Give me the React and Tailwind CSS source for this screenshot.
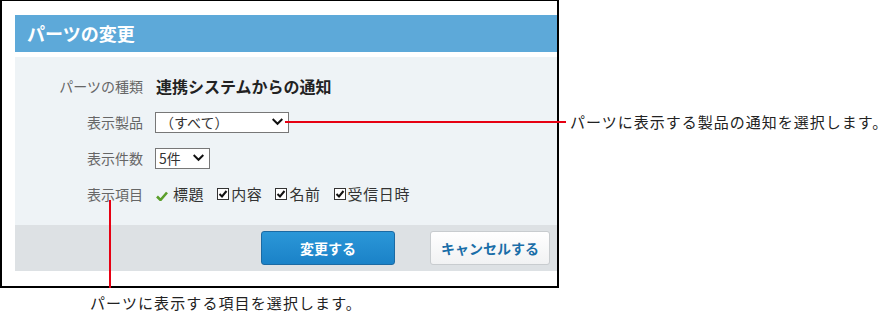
import React from "react";

const font = { fontFamily: '"Noto Sans CJK JP", "Noto Sans", sans-serif' };

function Chevron({ className }) {
  return (
    <svg viewBox="0 0 12 8" className={className} fill="none" stroke="#111" strokeWidth="2.2" strokeLinecap="square">
      <path d="M1.5 1.5 L6 6 L10.5 1.5" />
    </svg>
  );
}

function Check() {
  return (
    <svg viewBox="0 0 12 12" className="w-[12px] h-[12px]">
      <rect x="0.5" y="0.5" width="11" height="11" fill="#fff" stroke="#333" />
      <path d="M2.5 6 L5 8.5 L9.5 3" fill="none" stroke="#111" strokeWidth="2" />
    </svg>
  );
}

function CheckItem({ label }) {
  return (
    <div className="flex items-center gap-[2px]">
      <Check />
      <span>{label}</span>
    </div>
  );
}

export default function App() {
  return (
    <div className="relative w-[890px] h-[320px] bg-white text-[#222]" style={font}>
      <div className="w-[559px] h-[288px] border-x-2 border-b-2 border-t border-black pl-[13px] pt-[14px]">
        <div className="h-[37px] bg-[#5da9d9] flex items-center pl-[12px] text-white text-[18px] font-bold">
          パーツの変更
        </div>
        <div className="mt-[5px] h-[168px] bg-[#eef3f6] pt-[16px]">
          <div className="flex items-center h-[26px]">
            <div className="w-[128px] text-right text-[14px] text-[#666]">パーツの種類</div>
            <div className="ml-[13px] text-[16px] font-bold text-[#222]">連携システムからの通知</div>
          </div>
          <div className="flex items-center h-[36px] mt-[5px]">
            <div className="w-[128px] text-right text-[14px] text-[#666]">表示製品</div>
            <div className="ml-[12px] w-[134px] h-[21px] border border-[#777] bg-white flex items-center justify-between pl-[4px] pr-[5px] text-[14px] text-[#333]">
              <span>（すべて）</span>
              <Chevron className="w-[11px] h-[8px]" />
            </div>
          </div>
          <div className="flex items-center h-[36px]">
            <div className="w-[128px] text-right text-[14px] text-[#666]">表示件数</div>
            <div className="ml-[12px] w-[55px] h-[21px] border border-[#777] bg-white flex items-center justify-between pl-[3px] pr-[5px] text-[14px] text-[#333]">
              <span>5件</span>
              <Chevron className="w-[11px] h-[8px]" />
            </div>
          </div>
          <div className="flex items-center h-[36px]">
            <div className="w-[128px] text-right text-[14px] text-[#666]">表示項目</div>
            <div className="ml-[13px] flex items-center text-[15px] tracking-[0.6px] text-[#333]">
              <div className="flex items-center gap-[5px]">
                <svg viewBox="0 0 12 10" className="w-[12px] h-[10px] mt-[3px]">
                  <path d="M1 5.5 L4.5 9 L11 1.5" fill="none" stroke="#5a9e2a" strokeWidth="2.6" />
                </svg>
                <span>標題</span>
              </div>
              <div className="ml-[13px] flex items-center gap-[13px]">
                <CheckItem label="内容" />
                <CheckItem label="名前" />
                <CheckItem label="受信日時" />
              </div>
            </div>
          </div>
        </div>
        <div className="h-[46px] bg-[#dde1e4] flex items-center justify-end pr-[7px] gap-[35px]">
          <button className="w-[134px] h-[34px] rounded-[3px] border border-[#1b6aa3] bg-gradient-to-b from-[#2b97d8] to-[#1a82c8] text-white text-[14px] font-bold">
            変更する
          </button>
          <button className="w-[120px] h-[34px] rounded-[3px] border border-[#c8cccf] bg-gradient-to-b from-white to-[#f1f2f3] text-[#1a6ea8] text-[14px] font-bold">
            キャンセルする
          </button>
        </div>
      </div>
      <div className="pl-[90px] pt-[4px] text-[15px] tracking-[1.1px] text-[#222]">パーツに表示する項目を選択します。</div>

      <div className="absolute left-[285px] top-[121px] w-[281px] h-[2px] bg-[#e60012]" />
      <div className="absolute left-[570px] top-[111px] text-[15px] tracking-[1px] leading-[22px] text-[#222]">
        パーツに表示する製品の通知を選択します。
      </div>
      <div className="absolute left-[109px] top-[200px] w-[2px] h-[88px] bg-[#e60012]" />
    </div>
  );
}
